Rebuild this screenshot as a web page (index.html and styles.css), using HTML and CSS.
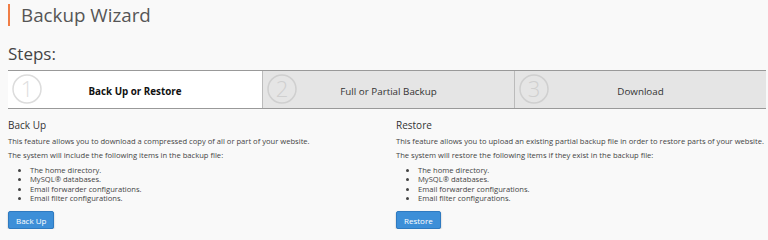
FILE: index.html
```html
<!DOCTYPE html>
<html>
<head>
<meta charset="utf-8">
<link rel="stylesheet" href="styles.css">
</head>
<body>
<div class="page">
  <h1 class="title">Backup Wizard</h1>
  <h2 class="steps-title">Steps:</h2>
  <div class="steps">
    <div class="step active">
      <svg class="num" viewBox="0 0 30 30" width="30" height="30"><circle cx="15" cy="15" r="14" fill="none" stroke="#dcdcdc" stroke-width="1.5"/><text x="15" y="23" text-anchor="middle" class="digit">1</text></svg>
      <span class="label">Back Up or Restore</span>
    </div>
    <div class="step">
      <svg class="num" viewBox="0 0 30 30" width="30" height="30"><circle cx="15" cy="15" r="14" fill="none" stroke="#cfcfcf" stroke-width="1.5"/><text x="15" y="23" text-anchor="middle" class="digit">2</text></svg>
      <span class="label">Full or Partial Backup</span>
    </div>
    <div class="step">
      <svg class="num" viewBox="0 0 30 30" width="30" height="30"><circle cx="15" cy="15" r="14" fill="none" stroke="#cfcfcf" stroke-width="1.5"/><text x="15" y="23" text-anchor="middle" class="digit">3</text></svg>
      <span class="label">Download</span>
    </div>
  </div>
  <div class="cols">
    <div class="col">
      <h3 class="sec-title">Back Up</h3>
      <p class="txt">This feature allows you to download a compressed copy of all or part of your website.</p>
      <p class="txt">The system will include the following items in the backup file:</p>
      <ul class="items">
        <li>The home directory.</li>
        <li>MySQL® databases.</li>
        <li>Email forwarder configurations.</li>
        <li>Email filter configurations.</li>
      </ul>
      <button class="btn">Back Up</button>
    </div>
    <div class="col">
      <h3 class="sec-title">Restore</h3>
      <p class="txt">This feature allows you to upload an existing partial backup file in order to restore parts of your website.</p>
      <p class="txt">The system will restore the following items if they exist in the backup file:</p>
      <ul class="items">
        <li>The home directory.</li>
        <li>MySQL® databases.</li>
        <li>Email forwarder configurations.</li>
        <li>Email filter configurations.</li>
      </ul>
      <button class="btn">Restore</button>
    </div>
  </div>
</div>
</body>
</html>
```
FILE: styles.css
```css
html, body {
  margin: 0;
  padding: 0;
  background: #f9f9f9;
}
body {
  font-family: "Open Sans", "Liberation Sans", sans-serif;
  color: #333;
}
.page {
  padding: 4px 2px 0 8px;
}
.title {
  margin: 0;
  font-size: 18.8px;
  font-weight: 400;
  color: #555;
  line-height: 22px;
  border-left: 2px solid #f07d45;
  padding-left: 11px;
  height: 22px;
}
.steps-title {
  margin: 17px 0 0;
  font-size: 17px;
  font-weight: 400;
  color: #444;
  line-height: 22px;
}
.steps {
  margin-top: 5px;
  display: grid;
  grid-template-columns: 254px 252px 1fr;
  border-top: 1px solid #999;
  border-bottom: 1px solid #999;
  height: 37px;
}
.step {
  position: relative;
  display: flex;
  align-items: center;
  justify-content: center;
  background: #e5e5e5;
  border-left: 1px solid #bbb;
}
.step.active {
  background: #fff;
  border-left: none;
}
.num {
  position: absolute;
  left: 4px;
  top: 3px;
}
.digit {
  font-family: "Open Sans", "DejaVu Sans", sans-serif;
  font-size: 22px;
  font-weight: 300;
  fill: #cfcfcf;
}
.step.active .digit { fill: #dedede; }
.label {
  font-size: 9.8px;
  color: #333;
  margin-top: 3px;
}
.step.active .label {
  font-weight: 700;
  color: #111;
}
.cols {
  display: grid;
  grid-template-columns: 388px 1fr;
  margin-top: 9px;
}
.sec-title {
  margin: 0;
  font-size: 10px;
  font-weight: 400;
  color: #333;
  line-height: 14px;
}
.txt {
  margin: 2.5px 0 0;
  font-size: 7.6px;
  line-height: 12px;
  color: #444;
  white-space: nowrap;
}
.items {
  margin: 5px 0 0;
  padding-left: 22px;
  font-size: 7.6px;
  line-height: 9.4px;
  color: #444;
}
.btn {
  display: block;
  margin-top: 7.4px;
  height: 18px;
  padding: 0 7px;
  border: 1px solid #2f7ac0;
  border-radius: 2px;
  background: #3d8fd8;
  color: #fff;
  font-family: "Open Sans", "Liberation Sans", sans-serif;
  font-size: 8px;
  box-shadow: 0 1px 2px rgba(0,0,0,0.25);
}
```
